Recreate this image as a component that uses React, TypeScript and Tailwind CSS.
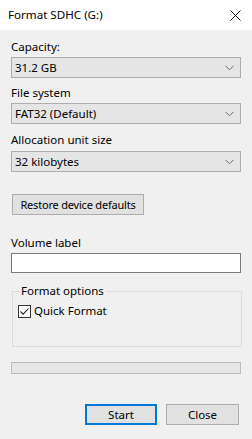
import React from "react";

const Chevron = () => (
  <svg width="9" height="6" viewBox="0 0 9 6" className="shrink-0">
    <path d="M0.5 0.8 L4.5 4.8 L8.5 0.8" fill="none" stroke="#6d6d6d" strokeWidth="1" />
  </svg>
);

const Combo = ({ value, mt }: { value: string; mt: string }) => (
  <div
    className={`${mt} h-[21px] w-[230px] border border-[#adadad] bg-[#e5e5e5] flex items-center justify-between pl-[3px] pr-[6px]`}
  >
    <span>{value}</span>
    <Chevron />
  </div>
);

export default function App() {
  return (
    <div
      className="w-[252px] h-[439px] bg-[#f0f0f0] text-black flex flex-col"
      style={{ fontFamily: '"Noto Sans", "Open Sans", sans-serif' }}
    >
      <div className="h-[30px] bg-white flex items-center justify-between pl-[8px] pr-[11px] shrink-0">
        <span className="text-[11.6px] leading-[16px]">Format SDHC (G:)</span>
        <svg width="11" height="11" viewBox="0 0 11 11">
          <path d="M0.5 0.5 L10.5 10.5 M10.5 0.5 L0.5 10.5" stroke="#111" strokeWidth="1" />
        </svg>
      </div>
      <div className="flex flex-col pl-[11px] text-[11.5px] leading-[16px] whitespace-nowrap">
        <div className="mt-[9px]">Capacity:</div>
        <Combo value="31.2 GB" mt="mt-[2px]" />
        <div className="mt-[7px]">File system</div>
        <Combo value="FAT32 (Default)" mt="mt-[2px]" />
        <div className="mt-[8px]">Allocation unit size</div>
        <Combo value="32 kilobytes" mt="mt-[3px]" />
        <div className="mt-[22px] ml-[1px] h-[21px] w-[132px] border border-[#adadad] bg-[#e1e1e1] flex items-center justify-center text-[11px] tracking-[-0.2px]">
          Restore device defaults
        </div>
        <div className="mt-[20px]">Volume label</div>
        <div className="mt-[2px] h-[20px] w-[230px] border border-[#7a7a7a] bg-white" />
        <div className="mt-[18px] ml-[1px] relative h-[56px] w-[230px] border border-[#dcdcdc]">
          <span className="absolute -top-[9px] left-[6px] px-[2px] bg-[#f0f0f0]">Format options</span>
          <div className="absolute top-[11px] left-[5px] flex items-center">
            <div className="w-[13px] h-[13px] border border-[#333] bg-white flex items-center justify-center">
              <svg width="11" height="11" viewBox="0 0 11 11">
                <path d="M1.5 5.5 L4.2 8.2 L9.5 2.5" fill="none" stroke="#222" strokeWidth="1.1" />
              </svg>
            </div>
            <span className="ml-[3px]">Quick Format</span>
          </div>
        </div>
        <div className="mt-[15px] h-[12px] w-[230px] border border-[#bcbcbc] bg-[#e6e6e6]" />
        <div className="mt-[30px] flex ml-[74px] gap-[9px]">
          <div className="h-[21px] w-[72px] border-2 border-[#0078d7] bg-[#e1e1e1] flex items-center justify-center">
            Start
          </div>
          <div className="h-[21px] w-[73px] border border-[#adadad] bg-[#e1e1e1] flex items-center justify-center">
            Close
          </div>
        </div>
      </div>
    </div>
  );
}
